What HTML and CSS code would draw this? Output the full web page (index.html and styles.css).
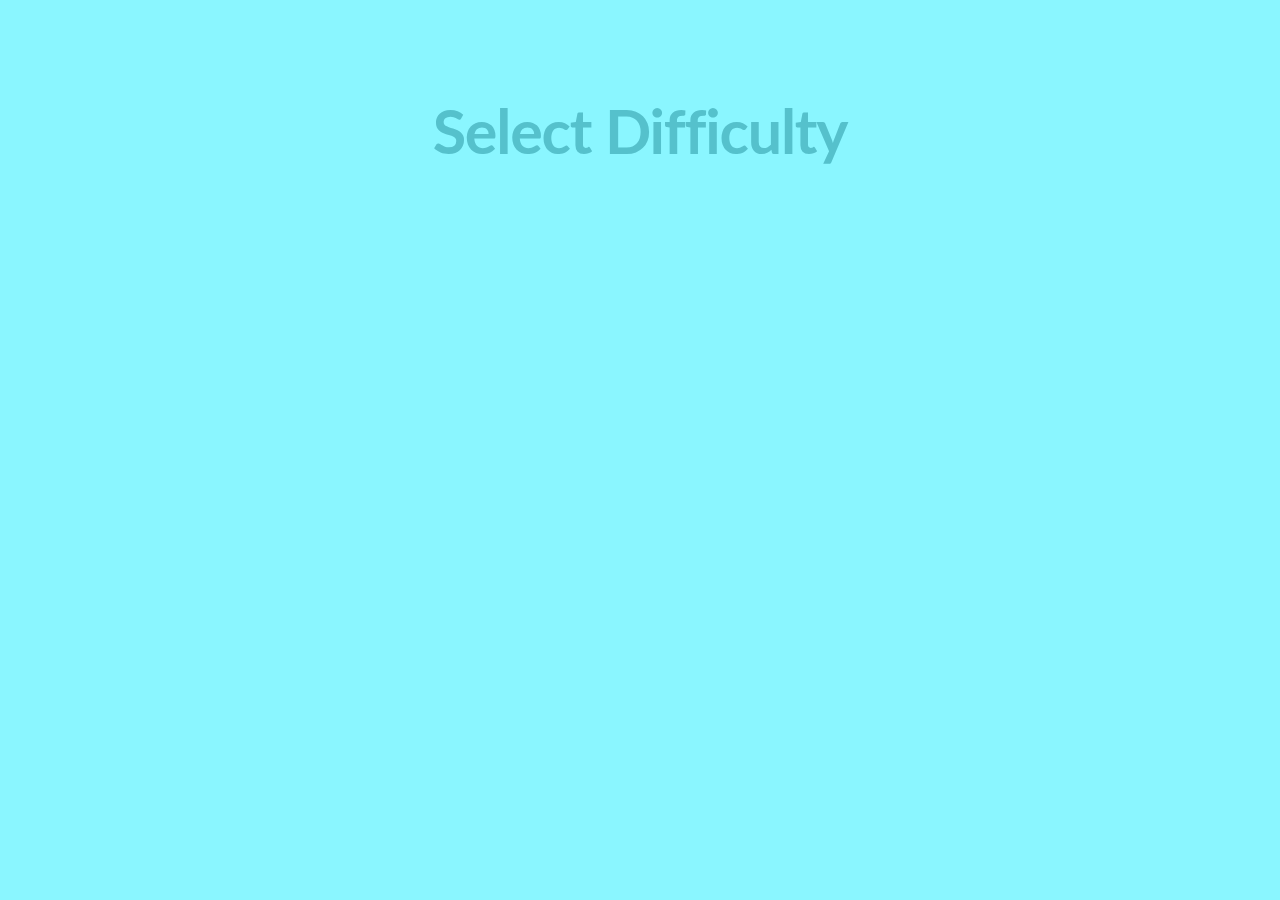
FILE: index.html
```html
<!DOCTYPE html>
<html lang="en">
<head>
<meta charset="utf-8">
<title>Select Difficulty</title>
<link rel="stylesheet" href="styles.css">
</head>
<body>
<main class="screen">
  <h1 class="title">Select Difficulty</h1>
</main>
</body>
</html>
```

FILE: styles.css
```css
html, body {
  margin: 0;
  padding: 0;
  height: 100%;
}
body {
  background: #8af6ff;
  font-family: "Lato", "Open Sans", sans-serif;
}
.screen {
  display: flex;
  flex-direction: column;
  align-items: center;
  padding-top: 95px;
}
.title {
  margin: 0;
  font-size: 61px;
  line-height: 72px;
  font-weight: 700;
  color: #55c1cc;
  letter-spacing: -1.2px;
}
```
